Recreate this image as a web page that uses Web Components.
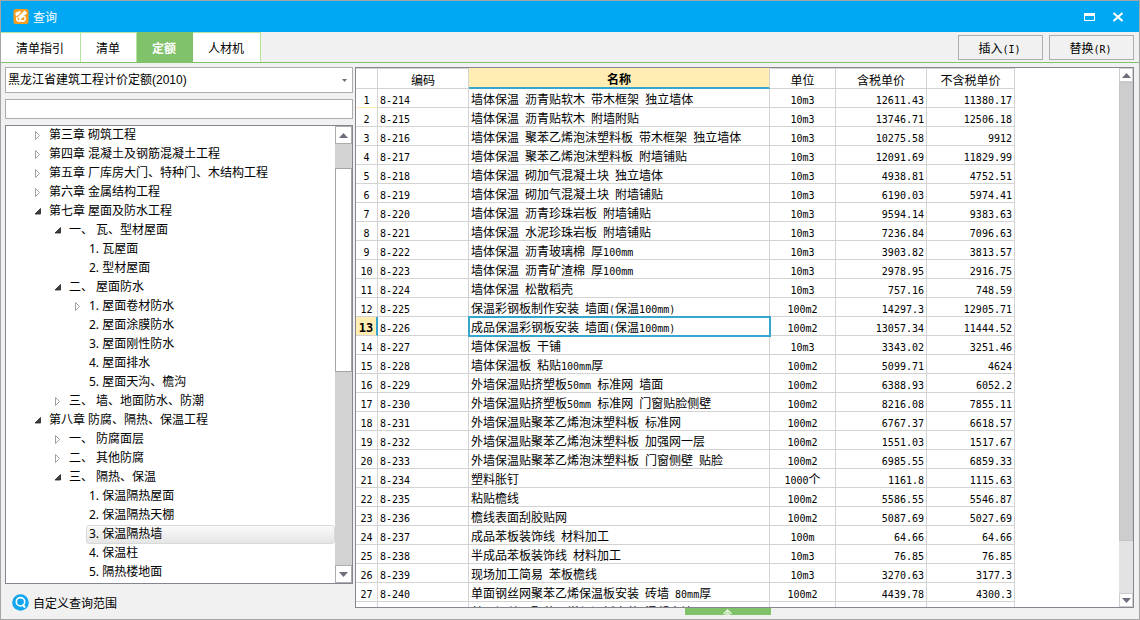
<!DOCTYPE html>
<html lang="zh-CN">
<head>
<meta charset="utf-8">
<title>查询</title>
<style>
html,body{margin:0;height:100%}
body{font:12px/18px "Noto Sans CJK SC",sans-serif;color:#000;overflow:hidden;
--line:#d3d3d3;--edge:#868691;--green:#80c269;--blue:#37a6cd;--yellow:#ffedb3;--latin:"DejaVu Sans Mono",monospace}
</style>
</head>
<body>
<query-window></query-window>
<script>
const esc = s => s.replace(/&/g,'&amp;').replace(/</g,'&lt;');
// Latin runs are half as wide as an ideograph, so they get the monospace face.
const mixed = s => esc(s).replace(/[ -~]+/g, m => `<span class="l">${m}</span>`);
const LATIN = '.l{font:10px/12px var(--latin);white-space:pre}';
function define(name, html, setup){
  const t = document.createElement('template');
  customElements.define(name, class extends HTMLElement{
    constructor(){ super(); this.attachShadow({mode:'open'}); }
    connectedCallback(){
      if(this.shadowRoot.childNodes.length) return;
      t.innerHTML = typeof html === 'function' ? html(this) : html;
      this.shadowRoot.append(t.content.cloneNode(true));
      if(setup) setup(this);
    }
  });
}

define('title-bar', `
<style>
:host{display:flex;align-items:center;height:31px;background:#00a8f3;color:#fff;padding:0 14px 0 12px;box-sizing:border-box}
h1{font:inherit;margin:0 0 0 4px;flex:1}
svg{display:block}
button{background:none;border:0;padding:0;color:inherit;width:14px;height:14px;margin-left:15px}
</style>
<svg width="16" height="17" viewBox="0 0 17 17" aria-hidden="true"><rect x=".5" y=".5" width="16" height="16" rx="2.5" fill="#f99d1c"/>
<path d="M3 4.500 8 3 6.500 6 3.500 8zM12.500 2.500 14.500 5 7.500 10.500 5.500 9z" fill="#fff" stroke="#fff" stroke-width=".8"/><path d="M4.500 9C3 12.500 5.500 14.500 8.500 12.500 9.500 14 13 13.500 13 10.500c0-2-2-2.500-3.500-1.500L6.500 11.500" fill="none" stroke="#fff" stroke-width="1.700"/></svg>
<h1>查询</h1>
<button aria-label="最大化"><svg width="14" height="14"><path d="M2.500 3.500h10v7h-10z" fill="none" stroke="#fff"/><path d="M2 3h11v3H2z" fill="#fff"/></svg></button>
<button aria-label="关闭"><svg width="14" height="14"><path d="M2.500 3l9 8M11.500 3l-9 8" stroke="#fff" stroke-width="2.200"/></svg></button>`);

define('tool-bar', `
<style>
:host{display:flex;height:31px;box-sizing:border-box;border-bottom:1px solid var(--green);padding-right:4px}
nav{display:flex;flex:1}
.actions{display:flex;gap:6px;padding:3px 1px 2px 0}
</style><nav role="tablist"><slot name="tab"></slot></nav><div class="actions"><slot></slot></div>`);

define('tab-button', `
<style>
:host{display:block}
button{font:inherit;height:30px;padding:1px 16px 0 15px;border:0;border-top:1px solid #b4e59f;border-right:1px solid #b4e59f;background:#fff;color:#000;display:block}
:host([selected]) button{background:var(--green);border-color:var(--green);color:#fff;font-weight:bold}
</style><button role="tab"><slot></slot></button>`);

define('push-button', el => `
<style>${LATIN}
:host{display:block}
button{font:inherit;width:85px;height:25px;padding:0 2px 0 0;border:1px solid #adadad;background:#f1f1f1;color:#000;display:block}
</style><button>${mixed(el.getAttribute('label'))}</button>`);

define('scroll-bar', `
<style>
:host{display:flex;flex-direction:column;width:var(--w,14px);background:var(--track,#e3e3e3)}
button{flex:none;height:var(--b,14px);padding:0;border:1px solid var(--bb,#cdcdcd);background:#fff;display:grid;place-items:center}
.before{flex:var(--before,0)}.thumb{flex:var(--thumb,460);background:var(--fill,#cdcdcd);border:1px solid var(--tb,#c4c4c4);box-sizing:border-box}
.after{flex:var(--after,52)}
svg{display:block}
</style>
<button aria-label="向上滚动" tabindex="-1"><svg width="9" height="5"><path d="M4.500 0 9 5H0z" fill="#6d6d7b"/></svg></button>
<div class="before"></div><div class="thumb"></div><div class="after"></div>
<button aria-label="向下滚动" tabindex="-1"><svg width="9" height="5"><path d="M0 0h9L4.500 5z" fill="#6d6d7b"/></svg></button>`);

define('scope-panel', `
<style>
:host{display:flex;flex-direction:column;width:348px;flex:none;box-sizing:border-box;padding-top:4px}
.combo{position:relative;display:block}
.combo svg{position:absolute;right:6px;top:12px}
select{appearance:none;font:12px/18px "Liberation Sans","Noto Sans CJK SC",sans-serif;width:100%;height:26px;border:1px solid #adadad;border-radius:0;background:#fff;color:#000;padding:0 2px;display:block;box-sizing:border-box}
input{font:inherit;height:20px;margin:6px 0;border:1px solid #adadad;background:#fff;box-sizing:border-box;width:100%;padding:0 3px}
.tree{flex:1;min-height:0;display:flex;border:1px solid var(--edge);background:#fff;overflow:hidden}
.items{flex:1;overflow:hidden;font-family:"Noto Sans","Noto Sans CJK SC",sans-serif}
scroll-bar{--w:17px;--b:18px;--bb:#adadad;--track:#d2d2d2;--before:24;--thumb:204;--after:194;--fill:#fff;--tb:#a5a5a5}
footer{height:35px;flex:none;display:flex;align-items:center;padding:2px 0 0 7px;box-sizing:border-box}
footer button{font:inherit;color:inherit;border:0;background:none;padding:0;display:flex;align-items:center;gap:4px}
</style>
<label class="combo"><select aria-label="定额库"><option>黑龙江省建筑工程计价定额(2010)</option></select><svg width="5" height="3"><path d="M0 0h5L2.500 3z" fill="#6d6d7b"/></svg></label>
<input type="text" aria-label="搜索">
<div class="tree"><div class="items" role="tree"><slot></slot></div><scroll-bar></scroll-bar></div>
<footer><button><svg width="17" height="17" viewBox="0 0 17 17"><circle cx="8.500" cy="8.500" r="8.300" fill="#10a5ee"/><circle cx="8.500" cy="7.800" r="4.200" fill="none" stroke="#fff" stroke-width="1.600"/><path d="M10.500 10.500l2.500 3" stroke="#fff" stroke-width="2"/></svg><span>自定义查询范围</span></button></footer>`);

define('tree-row', el => {
  const open = el.hasAttribute('open'), leaf = el.hasAttribute('leaf');
  const icon = leaf ? '' : open ? '<path d="M6.500 1.500v5.500H1z" fill="#404040" stroke="#222" stroke-width=".8"/>' : '<path d="M1.500 .5 5.500 4.500 1.500 8.500z" fill="#fff" stroke="#a0a0a0"/>';
  return `
<style>
:host{display:flex;height:19px;padding-left:calc(28px + 20px * var(--depth))}
svg{width:8px;height:9px;margin:5px 4px 0 0;flex:none}
span{flex:1;min-width:0;box-sizing:border-box;height:19px;line-height:15px;padding-left:2px;border:1px solid transparent;white-space:nowrap}
:host([selected]) span{border-color:#d9d9d9;border-radius:3px;background:linear-gradient(#fafafa,#e5e5e5)}
</style><svg aria-hidden="true">${icon}</svg><span><slot></slot></span>`;
}, el => { el.setAttribute('role','treeitem'); el.style.setProperty('--depth', el.getAttribute('depth')); });

const rows = `墙体保温 沥青贴软木 带木框架 独立墙体|10m3|12611.43|11380.17
墙体保温 沥青贴软木 附墙附贴|10m3|13746.71|12506.18
墙体保温 聚苯乙烯泡沫塑料板 带木框架 独立墙体|10m3|10275.58|9912
墙体保温 聚苯乙烯泡沫塑料板 附墙铺贴|10m3|12091.69|11829.99
墙体保温 砌加气混凝土块 独立墙体|10m3|4938.81|4752.51
墙体保温 砌加气混凝土块 附墙铺贴|10m3|6190.03|5974.41
墙体保温 沥青珍珠岩板 附墙铺贴|10m3|9594.14|9383.63
墙体保温 水泥珍珠岩板 附墙铺贴|10m3|7236.84|7096.63
墙体保温 沥青玻璃棉 厚100mm|10m3|3903.82|3813.57
墙体保温 沥青矿渣棉 厚100mm|10m3|2978.95|2916.75
墙体保温 松散稻壳|10m3|757.16|748.59
保温彩钢板制作安装 墙面(保温100mm)|100m2|14297.3|12905.71
成品保温彩钢板安装 墙面(保温100mm)|100m2|13057.34|11444.52
墙体保温板 干铺|10m3|3343.02|3251.46
墙体保温板 粘贴100mm厚|100m2|5099.71|4624
外墙保温贴挤塑板50mm 标准网 墙面|100m2|6388.93|6052.2
外墙保温贴挤塑板50mm 标准网 门窗贴脸侧壁|100m2|8216.08|7855.11
外墙保温贴聚苯乙烯泡沫塑料板 标准网|100m2|6767.37|6618.57
外墙保温贴聚苯乙烯泡沫塑料板 加强网一层|100m2|1551.03|1517.67
外墙保温贴聚苯乙烯泡沫塑料板 门窗侧壁 贴脸|100m2|6985.55|6859.33
塑料胀钉|1000个|1161.8|1115.63
粘贴檐线|100m2|5586.55|5546.87
檐线表面刮胶贴网|100m2|5087.69|5027.69
成品苯板装饰线 材料加工|100m|64.66|64.66
半成品苯板装饰线 材料加工|10m3|76.85|76.85
现场加工简易 苯板檐线|10m3|3270.63|3177.3
单面钢丝网聚苯乙烯保温板安装 砖墙 80mm厚|100m2|4439.78|4300.3
单面钢丝网聚苯乙烯保温板安装 混凝土墙 80mm厚|||`.split('\n').map(r => r.split('|'));
// Codes run on without a gap from 8-214; the last row only peeks in at the foot of the view.
const last = rows.length - 1;

define('quota-grid', () => `
<style>${LATIN}
:host{display:flex;flex:1;min-width:0;border:1px solid var(--edge);background:#fff;overflow:hidden}
.view{flex:1;min-width:0;overflow:hidden;contain:size}
table{border-collapse:separate;border-spacing:0;table-layout:fixed;width:659px}
th,td{box-sizing:border-box;height:19px;padding:1px 2px 0;border:0 solid var(--line);border-width:0 1px 1px 0;font-weight:normal;line-height:17px;white-space:nowrap;text-align:right}
thead th{height:21px;border-top-width:1px;text-align:center}
thead th.cur{background:var(--yellow);font-weight:bold;border-bottom:2px solid var(--blue);border-top-color:var(--yellow)}
td.code,td.name{text-align:left}
td.unit,tbody th{text-align:center;padding:1px 0 0}
tbody tr:first-child th{border-bottom-color:var(--yellow)}
tr.sel th{background:var(--yellow);border-right:2px solid var(--blue)}
tr.sel th .l{font-weight:bold;font-size:12px}
tr.sel .name{outline:2px solid var(--blue);outline-offset:-1px}
</style>
<div class="view"><table>
<colgroup><col style="width:22px"><col style="width:91px"><col style="width:301px"><col style="width:66px"><col style="width:91px"><col style="width:88px"></colgroup>
<thead><tr><th></th><th>编码</th><th class="cur">名称</th><th>单位</th><th>含税单价</th><th>不含税单价</th></tr></thead>
<tbody>${rows.map(([n,u,a,b],i)=>`<tr${i===12?' class="sel"':''}><th scope="row">${i<last?mixed(''+(i+1)):''}</th><td class="code">${i<last?mixed('8-'+(214+i)):''}</td><td class="name">${mixed(n)}</td><td class="unit">${mixed(u)}</td><td>${mixed(a)}</td><td>${mixed(b)}</td></tr>`).join('')}</tbody>
</table></div><scroll-bar></scroll-bar>`);

const tree = [
[0,'c','第三章 砌筑工程'],[0,'c','第四章 混凝土及钢筋混凝土工程'],[0,'c','第五章 厂库房大门、特种门、木结构工程'],[0,'c','第六章 金属结构工程'],[0,'o','第七章 屋面及防水工程'],
[1,'o','一、 瓦、型材屋面'],[2,'l','1. 瓦屋面'],[2,'l','2. 型材屋面'],[1,'o','二、 屋面防水'],[2,'c','1. 屋面卷材防水'],[2,'l','2. 屋面涂膜防水'],[2,'l','3. 屋面刚性防水'],[2,'l','4. 屋面排水'],[2,'l','5. 屋面天沟、檐沟'],[1,'c','三、 墙、地面防水、防潮'],
[0,'o','第八章 防腐、隔热、保温工程'],[1,'c','一、 防腐面层'],[1,'c','二、 其他防腐'],[1,'o','三、 隔热、保温'],[2,'l','1. 保温隔热屋面'],[2,'l','2. 保温隔热天棚'],[2,'l','3. 保温隔热墙',1],[2,'l','4. 保温柱'],[2,'l','5. 隔热楼地面']];

define('query-window', () => `
<style>
:host{display:flex;flex-direction:column;height:100vh;box-sizing:border-box;border:1px solid #a5a5a5;background:#f1f1f1}
main{flex:1;min-height:0;display:flex;gap:2px;padding:0 5px 0 4px}
.right{flex:1;min-width:0;display:flex;flex-direction:column;padding-top:4px}
.foot{height:11px;flex:none;display:flex;justify-content:center}
.foot button{width:86px;height:7px;margin-right:34px;padding:0;border:0;background:var(--green);display:flex;justify-content:center}
</style>
<title-bar></title-bar>
<tool-bar>
<tab-button slot="tab">清单指引</tab-button><tab-button slot="tab">清单</tab-button><tab-button slot="tab" selected>定额</tab-button><tab-button slot="tab">人材机</tab-button>
<push-button label="插入(I)"></push-button><push-button label="替换(R)"></push-button>
</tool-bar>
<main>
<scope-panel>${tree.map(([d,k,t,s])=>`<tree-row depth="${d}"${k==='o'?' open':k==='l'?' leaf':''}${s?' selected':''}>${t}</tree-row>`).join('')}</scope-panel>
<div class="right"><quota-grid></quota-grid><div class="foot"><button aria-label="展开"><svg width="11" height="7"><path d="M1.500 6 5.500 2l4 4M3.500 7l2-2 2 2" fill="none" stroke="#e6f5df" stroke-width="1.500"/></svg></button></div></div>
</main>`);
</script>
</body>
</html>
